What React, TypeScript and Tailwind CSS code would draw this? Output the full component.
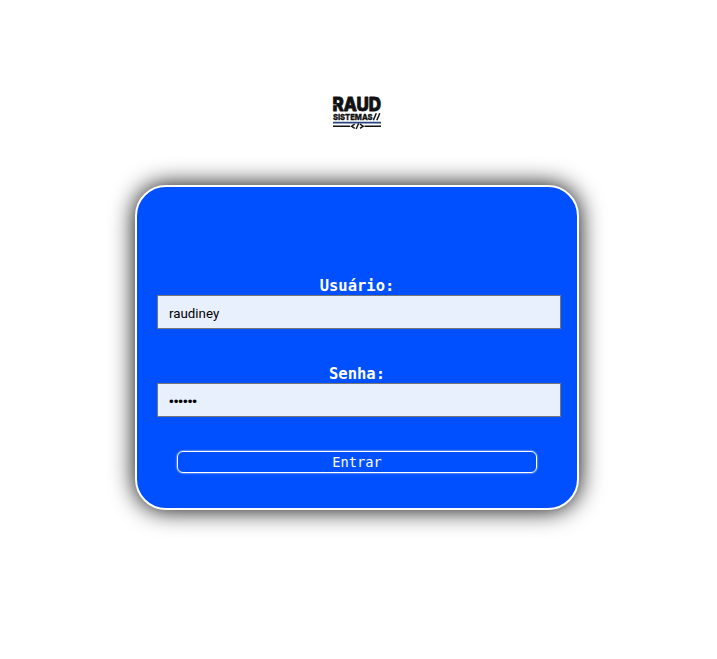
function Logo() {
  return (
    <svg width="54" height="42" viewBox="-2 -8 54 42" className="shrink-0 font-['Inter','Liberation_Sans',sans-serif] font-extrabold" fill="#111">
      <text x="0.5" y="14.8" fontSize="18.3" stroke="#111" strokeWidth="0.9" strokeLinejoin="round" textLength="48.5" lengthAdjust="spacingAndGlyphs">RAUD</text>
      <path d="M0 8.8H4.5" stroke="#fff" strokeWidth="0.7" />
      <text x="1" y="23.7" fontSize="8.2" stroke="#111" strokeWidth="0.3" textLength="39.5" lengthAdjust="spacingAndGlyphs">SISTEMAS</text>
      <path d="M41.3 24.2 44.3 17.2M44.8 24.2 47.8 17.2" stroke="#111" strokeWidth="1.5" />
      <path d="M1 26.6H49" stroke="#27457f" strokeWidth="1.6" />
      <path d="M1 30.3H18M32.5 30.3H49" stroke="#111" strokeWidth="1.6" />
      <path d="m22.7 28.1-3.2 2.1 3.2 2.1M28 28.1l3.2 2.1-3.2 2.1M26.7 27.4l-2.6 5.6" stroke="#111" strokeWidth="1.4" fill="none" />
    </svg>
  );
}

export default function App() {
  return (
    <main className="flex h-[659px] w-[717px] flex-col items-center overflow-hidden bg-white pr-[3px] pt-[88px]">
      <Logo />
      <form className="mt-[55px] flex h-[325px] w-[444px] shrink-0 flex-col rounded-[31px] border-2 border-white bg-[#0050ff] px-5 pt-[90px] font-['DejaVu_Sans_Mono',monospace] text-white shadow-[0_0_25px_#000]" onSubmit={(e) => e.preventDefault()}>
        <label htmlFor="user" className="h-[18px] text-center text-[15.5px] leading-[18px] font-bold">Usuário:</label>
        <input id="user" defaultValue="raudiney" className="h-[34px] w-[404px] border border-[#767676] bg-[#e8f0fe] px-[11px] pt-[3px] font-['Roboto','Liberation_Sans',sans-serif] text-[13.333px] text-black outline-none" />
        <label htmlFor="pass" className="mt-9 h-[18px] text-center text-[15.5px] leading-[18px] font-bold">Senha:</label>
        <input id="pass" type="password" defaultValue="123456" className="h-[34px] w-[404px] border border-[#767676] bg-[#e8f0fe] px-[11px] pt-[3px] font-['Liberation_Sans',sans-serif] text-[13.333px] text-black outline-none" />
        <button className="mx-5 mt-[34px] h-[22px] rounded-md border border-white text-[13.7px] leading-5 shadow-[0_0_2px_#fff]">Entrar</button>
      </form>
    </main>
  );
}
